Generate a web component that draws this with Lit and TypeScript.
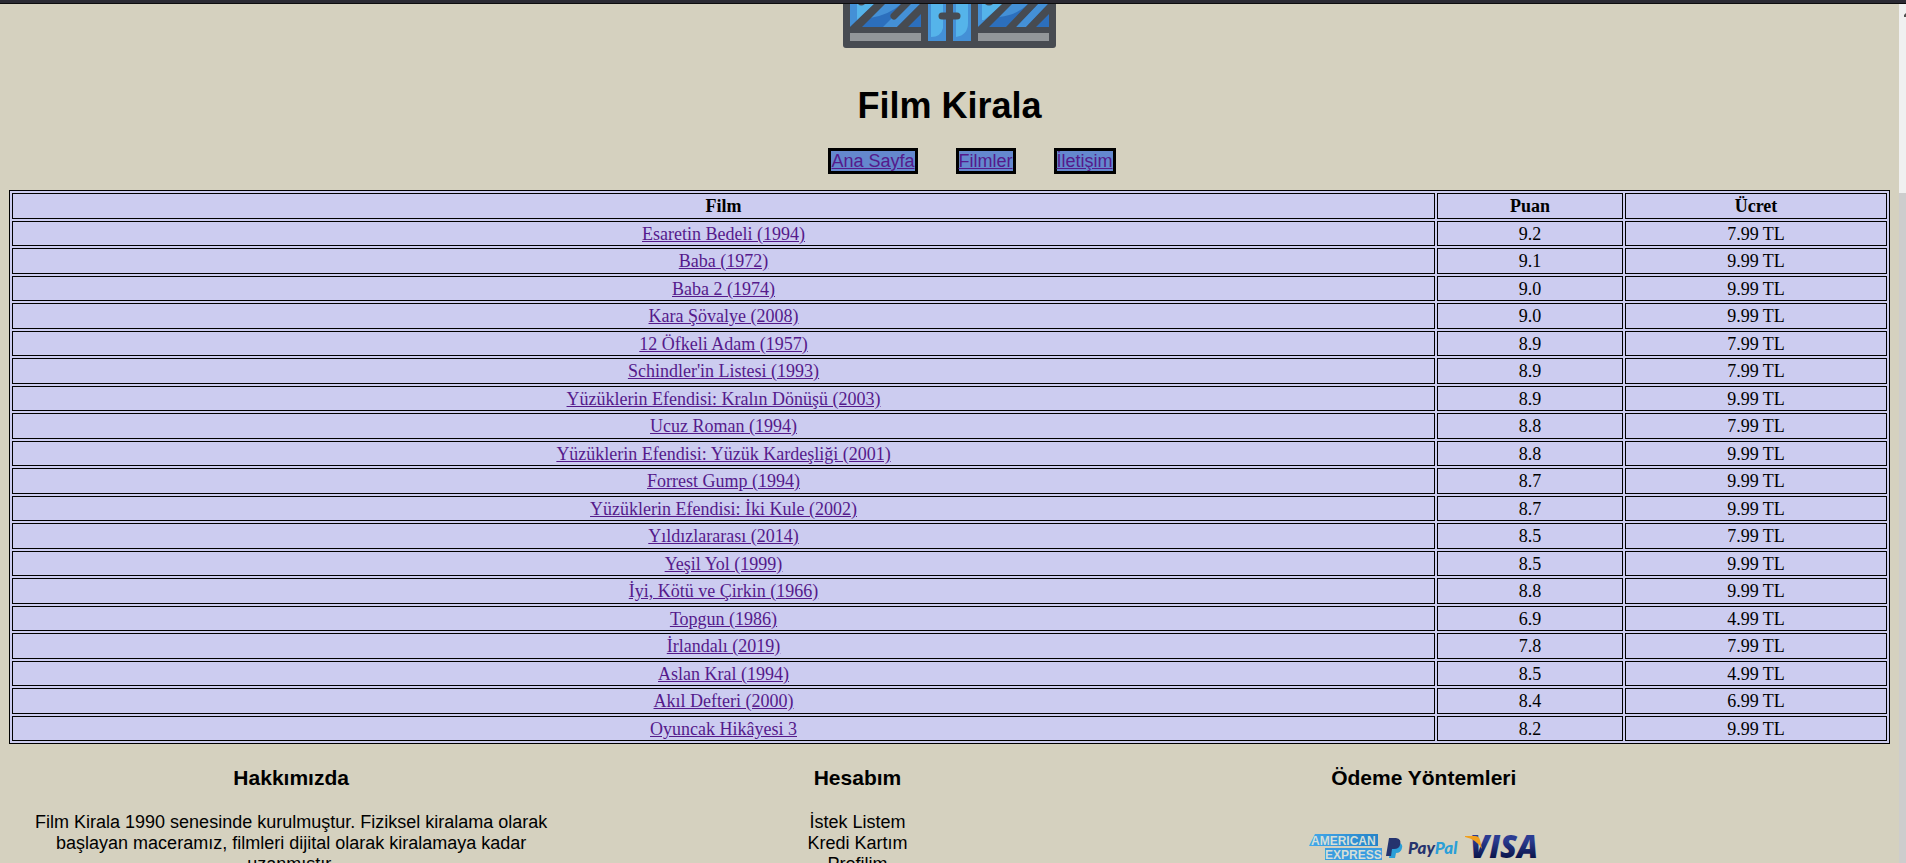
import { LitElement, html, css } from "lit";
import { customElement } from "lit/decorators.js";

interface Film {
  title: string;
  score: string;
  price: string;
}

const FILMS: Film[] = [
  { title: "Esaretin Bedeli (1994)", score: "9.2", price: "7.99 TL" },
  { title: "Baba (1972)", score: "9.1", price: "9.99 TL" },
  { title: "Baba 2 (1974)", score: "9.0", price: "9.99 TL" },
  { title: "Kara Şövalye (2008)", score: "9.0", price: "9.99 TL" },
  { title: "12 Öfkeli Adam (1957)", score: "8.9", price: "7.99 TL" },
  { title: "Schindler'in Listesi (1993)", score: "8.9", price: "7.99 TL" },
  { title: "Yüzüklerin Efendisi: Kralın Dönüşü (2003)", score: "8.9", price: "9.99 TL" },
  { title: "Ucuz Roman (1994)", score: "8.8", price: "7.99 TL" },
  { title: "Yüzüklerin Efendisi: Yüzük Kardeşliği (2001)", score: "8.8", price: "9.99 TL" },
  { title: "Forrest Gump (1994)", score: "8.7", price: "9.99 TL" },
  { title: "Yüzüklerin Efendisi: İki Kule (2002)", score: "8.7", price: "9.99 TL" },
  { title: "Yıldızlararası (2014)", score: "8.5", price: "7.99 TL" },
  { title: "Yeşil Yol (1999)", score: "8.5", price: "9.99 TL" },
  { title: "İyi, Kötü ve Çirkin (1966)", score: "8.8", price: "9.99 TL" },
  { title: "Topgun (1986)", score: "6.9", price: "4.99 TL" },
  { title: "İrlandalı (2019)", score: "7.8", price: "7.99 TL" },
  { title: "Aslan Kral (1994)", score: "8.5", price: "4.99 TL" },
  { title: "Akıl Defteri (2000)", score: "8.4", price: "6.99 TL" },
  { title: "Oyuncak Hikâyesi 3", score: "8.2", price: "9.99 TL" },
];

@customElement("app-root")
export class AppRoot extends LitElement {
  static styles = css`
    :host {
      display: flex;
      flex-direction: column;
      height: 100vh;
      overflow: hidden;
      background: #d5d1bf;
      color: #000;
      font-family: "Liberation Sans", Arial, sans-serif;
      font-size: 18px;
      line-height: 21px;
    }
    .edge {
      flex: none;
      height: 3px;
      background: #2b2a33;
      border-bottom: 1px solid #0c0c0d;
    }
    .frame {
      flex: 1;
      min-height: 0;
      display: flex;
    }
    .page {
      flex: 1;
      min-width: 0;
      overflow: hidden;
      padding: 0 9px;
    }
    .scroll {
      flex: none;
      width: 7px;
      overflow: hidden;
      display: flex;
      flex-direction: column;
      background: #f0f0f0;
    }
    .arrow {
      flex: none;
      width: 7px;
      height: 189px;
    }
    .thumb {
      flex: 1;
      background: #cdcdcd;
    }
    .shop {
      display: block;
      margin: 0 auto;
    }
    h1 {
      margin: 37px 0 21px;
      font-size: 36px;
      line-height: 42px;
      text-align: center;
    }
    .nav {
      display: flex;
      justify-content: center;
      gap: 38px;
      padding-left: 45px;
      margin-bottom: 16px;
    }
    .nav a {
      border: 3px solid #000;
      background: #6488ce;
      line-height: 20px;
    }
    a {
      color: #551a8b;
    }
    .films {
      width: 100%;
      border: 1px solid #000;
      border-spacing: 2px;
      background: #ccccf0;
      font-family: "Liberation Serif", "Times New Roman", serif;
      text-align: center;
      table-layout: fixed;
    }
    .films th,
    .films td {
      box-sizing: border-box;
      height: 26px;
      padding: 1px 1px 0;
      border: 1px solid #000;
    }
    .films .short td {
      height: 25px;
      padding-top: 2px;
    }
    .films .score {
      width: 186px;
    }
    .films .price {
      width: 262px;
    }
    .info {
      display: grid;
      grid-template-columns: repeat(3, 30%);
      column-gap: 2px;
      text-align: center;
    }
    .info section {
      padding: 0 10px;
    }
    h3 {
      margin: 22px 0;
      font-size: 21px;
      line-height: 24px;
    }
    p {
      margin: 0;
    }
    .pay {
      display: block;
      overflow: visible;
      margin: 0 auto;
      padding-top: 21px;
    }
    .amex {
      font: bold 12px "Liberation Sans", Arial, sans-serif;
      fill: #d5dfd8;
    }
    .paypal {
      font: italic 900 17px Lato, sans-serif;
      fill: #26346e;
    }
    .pal {
      fill: #2b9fd8;
    }
    .visa {
      font: italic 800 31px "Open Sans", sans-serif;
      fill: url(#navy);
    }
  `;

  private shop() {
    return html`<svg class="shop" width="213" height="44" viewBox="0 0 213 44" aria-hidden="true">
      <path d="M0 0H213V41Q213 44 210 44H3Q0 44 0 41Z" fill="#474b51" />
      <path d="M7 0H78V23H7Z" fill="#2c6fbd" />
      <path d="M7 0H31L7 23Z" fill="#4490d6" />
      <path d="M14 0H31L14 16Z" fill="#55b4ea" />
      <path d="M27 14Q46 11 58 0H38Z" fill="#4490d6" />
      <path d="M40 23H54L77 0H63Z" fill="#4490d6" />
      <path d="M7 23L31 0H42L19 23ZM54 23L77 0H78V10L65 23Z" fill="#474b51" />
      <path d="M51 12L65 -2" stroke="#474b51" stroke-width="7" stroke-linecap="round" />
      <path d="M15 0H22Q18 3 15 0Z" fill="#474b51" />
      <path d="M7 29H78V37H7ZM135 29H206V37H135Z" fill="#929699" />
      <path d="M85 0H103V37H85ZM110 0H128V37H110Z" fill="#4490d6" />
      <path d="M88 0H100V24Q98 33 88 33ZM113 33V0H125V19Q125 31 113 33Z" fill="#55b4ea" />
      <path d="M99 12H114" stroke="#474b51" stroke-width="7" stroke-linecap="round" />
      <path d="M135 0H206V23H135Z" fill="#2c6fbd" />
      <path d="M135 0H160L135 23Z" fill="#4490d6" />
      <path d="M139 0H160L141 16H139Z" fill="#55b4ea" />
      <path d="M156 13Q174 11 185 0H168Z" fill="#4490d6" />
      <path d="M173 23H183L205 0H195Z" fill="#4490d6" />
      <path d="M135 23L159 0H169L146 23ZM163 23L185 0H195L173 23ZM183 23L205 0H206V10L193 23Z" fill="#474b51" />
      <path d="M142 0H150Q146 3 142 0Z" fill="#474b51" />
    </svg>`;
  }

  private payments() {
    return html`<svg class="pay" width="230" height="28" viewBox="0 0 230 28" role="img" aria-label="American Express, PayPal, Visa">
      <defs>
        <linearGradient id="navy" x1="0" y1="0" x2="0" y2="1">
          <stop offset="0.35" stop-color="#2b3c92" />
          <stop offset="0.8" stop-color="#0a1347" />
        </linearGradient>
        <linearGradient id="sky" x1="0" x2="1">
          <stop offset="0" stop-color="#43a8ea" />
          <stop offset="1" stop-color="#2583c8" />
        </linearGradient>
      </defs>
      <path d="M6 1H69V13H0Z" fill="url(#sky)" />
      <path d="M16 15H73V27H16Z" fill="#3a9ce0" />
      <text class="amex" x="2" y="12">AMERICAN</text>
      <text class="amex" x="16" y="26">EXPRESS</text>
      <path d="M82 10H91Q94 12 93 15Q92 20 87 20L86 25H80Z" fill="#2b9fd8" />
      <path d="M80 5H87Q93 6 91 12Q90 16 85 16H83L82 23H77Z" fill="#25346f" />
      <text class="paypal" x="99" y="21">Pay<tspan class="pal">Pal</tspan></text>
      <text class="visa" x="161" y="25">VISA</text>
      <path d="M156 3H166Q170 3 171 7L173 16Q167 6 156 4Z" fill="#f0a01e" />
    </svg>`;
  }

  render() {
    return html`
      <div class="edge"></div>
      <div class="frame">
        <main class="page">
          ${this.shop()}
          <h1>Film Kirala</h1>
          <nav class="nav">
            <a href="#ana">Ana Sayfa</a>
            <a href="#filmler">Filmler</a>
            <a href="#iletisim">İletişim</a>
          </nav>
          <table class="films">
            <thead>
              <tr>
                <th>Film</th>
                <th class="score">Puan</th>
                <th class="price">Ücret</th>
              </tr>
            </thead>
            <tbody>
              ${FILMS.map(
                (f, i) => html`<tr class=${i % 2 ? "" : "short"}>
                  <td><a href="#film-${i + 1}">${f.title}</a></td>
                  <td>${f.score}</td>
                  <td>${f.price}</td>
                </tr>`
              )}
            </tbody>
          </table>
          <footer class="info">
            <section>
              <h3>Hakkımızda</h3>
              <p>
                Film Kirala 1990 senesinde kurulmuştur. Fiziksel kiralama olarak başlayan maceramız,
                filmleri dijital olarak kiralamaya kadar uzanmıştır.
              </p>
            </section>
            <section>
              <h3>Hesabım</h3>
              <p>İstek Listem</p>
              <p>Kredi Kartım</p>
              <p>Profilim</p>
            </section>
            <section>
              <h3>Ödeme Yöntemleri</h3>
              ${this.payments()}
            </section>
          </footer>
        </main>
        <div class="scroll" aria-hidden="true">
          <svg class="arrow" viewBox="0 0 7 189"><path d="M5 13V11L7 9V13Z" fill="#505050" /></svg>
          <div class="thumb"></div>
        </div>
      </div>
    `;
  }
}
